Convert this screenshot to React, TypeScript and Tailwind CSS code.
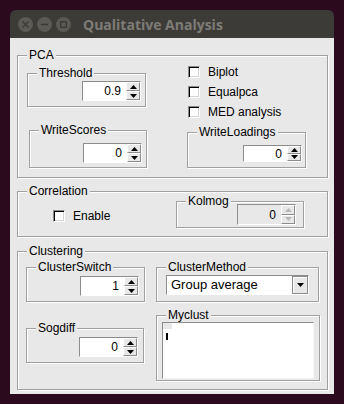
import type { ReactNode } from "react";

const BG = "bg-[#e8e8e8]";

function Group({
  label,
  className,
  children,
}: {
  label: string;
  className: string;
  children?: ReactNode;
}) {
  return (
    <div
      className={`relative border border-[#a0a0a0] shadow-[inset_1px_1px_0_#fff,1px_1px_0_#fff] ${className}`}
    >
      <span className={`absolute left-[9px] top-[-8px] ${BG} px-[2px] leading-[14px]`}>
        {label}
      </span>
      {children}
    </div>
  );
}

function Arrow({ up, disabled }: { up?: boolean; disabled?: boolean }) {
  return (
    <div className="flex flex-1 items-center justify-center border border-t-white border-l-white border-r-[#8c8c8c] border-b-[#8c8c8c] bg-[#e8e8e8]">
      <svg width="7" height="4" viewBox="0 0 7 4">
        <path
          d={up ? "M0 4L3.5 0L7 4Z" : "M0 0L3.5 4L7 0Z"}
          fill={disabled ? "#b8b8b8" : "#000"}
        />
      </svg>
    </div>
  );
}

function Spin({
  value,
  size,
  disabled,
}: {
  value: string;
  size: string;
  disabled?: boolean;
}) {
  return (
    <div
      className={`flex ${size} border border-t-[#8c8c8c] border-l-[#8c8c8c] border-b-white border-r-white`}
    >
      <div
        className={`flex w-[43px] items-center justify-end pr-[5px] leading-none ${
          disabled ? "bg-[#e8e8e8]" : "bg-white"
        }`}
      >
        {value}
      </div>
      <div className="flex w-[14px] flex-col">
        <Arrow up disabled={disabled} />
        <Arrow disabled={disabled} />
      </div>
    </div>
  );
}

function Check({ label }: { label: string }) {
  return (
    <div className="flex h-[20px] items-center">
      <div className="h-[12px] w-[12px] border border-t-[#8c8c8c] border-l-[#8c8c8c] border-r-white border-b-white bg-white shadow-[inset_1px_1px_0_#000,inset_-1px_-1px_0_#d4d4d4]" />
      <span className="ml-[8px] leading-none">{label}</span>
    </div>
  );
}

function TitleButton({ kind }: { kind: "close" | "min" | "max" }) {
  return (
    <div className="flex h-[15px] w-[15px] items-center justify-center rounded-full bg-[#5b5a55]">
      <svg width="7" height="7" viewBox="0 0 7 7" stroke="#3b3a36" strokeWidth="1.4" fill="none">
        {kind === "close" && <path d="M0.5 0.5L6.5 6.5M6.5 0.5L0.5 6.5" />}
        {kind === "min" && <path d="M0 3.5H7" />}
        {kind === "max" && <rect x="0.7" y="0.7" width="5.6" height="5.6" />}
      </svg>
    </div>
  );
}

export default function App() {
  return (
    <div className="h-[404px] w-[344px] overflow-hidden bg-[#2b0a1e] pl-[10px] pt-[10px] font-['Liberation_Sans',Arial,sans-serif] text-[12px] text-black">
      <div className="w-[324px]">
        {/* Title bar */}
        <div className="flex h-[28px] items-center rounded-t-[6px] bg-[#3c3b37] pl-[8px]">
          <div className="flex gap-[4px]">
            <TitleButton kind="close" />
            <TitleButton kind="min" />
            <TitleButton kind="max" />
          </div>
          <span className="ml-[12px] font-['Open_Sans',sans-serif] text-[14px] font-bold text-[#7e7c77]">
            Qualitative Analysis
          </span>
        </div>

        {/* Body */}
        <div className={`flex h-[356px] flex-col ${BG} pl-[7px] pr-[6px] pt-[17px]`}>
          {/* PCA */}
          <Group label="PCA" className="flex h-[123px]">
            <div className="ml-[9px] mt-[17px] flex flex-col">
              <Group label="Threshold" className="flex h-[34px] w-[119px] justify-end pr-[4px] pt-[7px]">
                <Spin value="0.9" size="h-[20px]" />
              </Group>
              <Group label="WriteScores" className="ml-[2px] mt-[23px] flex h-[38px] w-[118px] justify-end pr-[4px] pt-[12px]">
                <Spin value="0" size="h-[20px]" />
              </Group>
            </div>
            <div className="ml-[40px] flex flex-col pt-[6px]">
              <div className="ml-[1px]">
                <Check label="Biplot" />
                <Check label="Equalpca" />
                <Check label="MED analysis" />
              </div>
              <Group label="WriteLoadings" className="mt-[10px] flex h-[36px] w-[119px] justify-end pr-[3px] pt-[12px]">
                <Spin value="0" size="h-[17px]" />
              </Group>
            </div>
          </Group>

          {/* Correlation */}
          <Group label="Correlation" className="mt-[13px] flex h-[46px] items-start">
            <div className="ml-[35px] mt-[14px]">
              <Check label="Enable" />
            </div>
            <Group label="Kolmog" className="ml-auto mr-[23px] mt-[9px] flex h-[27px] w-[128px] justify-end pr-[7px] pt-[2px]">
              <Spin value="0" size="h-[21px]" disabled />
            </Group>
          </Group>

          {/* Clustering */}
          <Group label="Clustering" className="mt-[14px] flex h-[139px]">
            <div className="ml-[8px] mt-[15px] flex flex-col">
              <Group label="ClusterSwitch" className="flex h-[35px] w-[119px] justify-end pr-[5px] pt-[8px]">
                <Spin value="1" size="h-[20px]" />
              </Group>
              <Group label="Sogdiff" className="mt-[26px] flex h-[35px] w-[118px] justify-end pr-[5px] pt-[8px]">
                <Spin value="0" size="h-[20px]" />
              </Group>
            </div>
            <div className="ml-[11px] mt-[15px] flex flex-col">
              <Group label="ClusterMethod" className="h-[35px] w-[163px] pl-[9px] pt-[7px]">
                <div className="flex h-[20px] w-[143px] border border-t-[#8c8c8c] border-l-[#8c8c8c] border-b-white border-r-white bg-white">
                  <span className="flex-1 pl-[4px] text-[13px] leading-[18px]">Group average</span>
                  <div className="flex w-[16px] items-center justify-center border border-[#8c8c8c] bg-[#e8e8e8] shadow-[inset_1px_1px_0_#fff]">
                    <svg width="7" height="4" viewBox="0 0 7 4">
                      <path d="M0 0L3.5 4L7 0Z" fill="#000" />
                    </svg>
                  </div>
                </div>
              </Group>
              <Group label="Myclust" className="mt-[13px] h-[66px] w-[164px] pl-[5px] pt-[6px]">
                <div className="h-[57px] w-[152px] border border-t-[#8c8c8c] border-l-[#8c8c8c] border-b-[#f4f4f4] border-r-[#f4f4f4] bg-white">
                  <div className={`h-[6px] w-[9px] ${BG}`} />
                  <div className="ml-[3px] mt-[4px] h-[7px] w-[2px] bg-black" />
                </div>
              </Group>
            </div>
          </Group>
        </div>
      </div>
    </div>
  );
}
